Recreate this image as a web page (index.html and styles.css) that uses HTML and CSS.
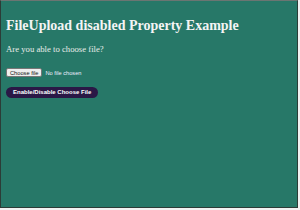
FILE: index.html
```html
<!DOCTYPE html>
<html lang="en">
<head>
    <meta charset="UTF-8">
    <meta name="viewport" content="width=device-width, initial-scale=1.0">
    <title>FileUpload disabled Property</title>
    <link rel="stylesheet" href="styles.css">
</head>
<body>
    <div class="frame">
        <h1>FileUpload disabled Property Example</h1>
        <p class="question">Are you able to choose file?</p>

        <div class="file-row">
            <label class="file-btn" for="fileInput">Choose file</label>
            <span class="file-name">No file chosen</span>
            <input type="file" id="fileInput" class="file-hidden">
        </div>

        <button class="toggle-btn" onclick="toggleFile()">Enable/Disable Choose File</button>
    </div>

    <script>
        function toggleFile() {
            const input = document.querySelector('#fileInput');
            input.disabled = !input.disabled;
        }
    </script>
</body>
</html>
```

FILE: styles.css
```css
* {
    margin: 0;
    padding: 0;
    box-sizing: border-box;
}

body {
    background: #f2f2f2;
    width: 300px;
    height: 210px;
}

.frame {
    width: 298px;
    height: 208px;
    background: #277868;
    border: 1px solid #2c3c37;
    border-top-color: #6b7572;
    padding: 16px 5px;
    font-family: 'Liberation Serif', serif;
    color: #f4f4f4;
}

h1 {
    font-size: 14px;
    font-weight: 700;
    line-height: 17px;
}

.question {
    font-size: 8.7px;
    margin-top: 10px;
    line-height: 11px;
    color: #e8ece9;
}

.file-row {
    display: flex;
    align-items: center;
    gap: 3px;
    margin-top: 13px;
    font-family: 'Liberation Sans', sans-serif;
    font-size: 5.7px;
}

.file-btn {
    background: #efefef;
    color: #111;
    border: 1px solid #767676;
    border-radius: 2px;
    padding: 0.5px 3px;
    line-height: 6px;
}

.file-name {
    color: #eef;
}

.file-hidden {
    display: none;
}

.toggle-btn {
    display: block;
    margin-top: 10px;
    background: #2a1846;
    color: #fff;
    border: none;
    border-radius: 6px;
    padding: 2px 7px;
    font-family: 'Liberation Sans', sans-serif;
    font-size: 6px;
    font-weight: 700;
    line-height: 7px;
}
```
